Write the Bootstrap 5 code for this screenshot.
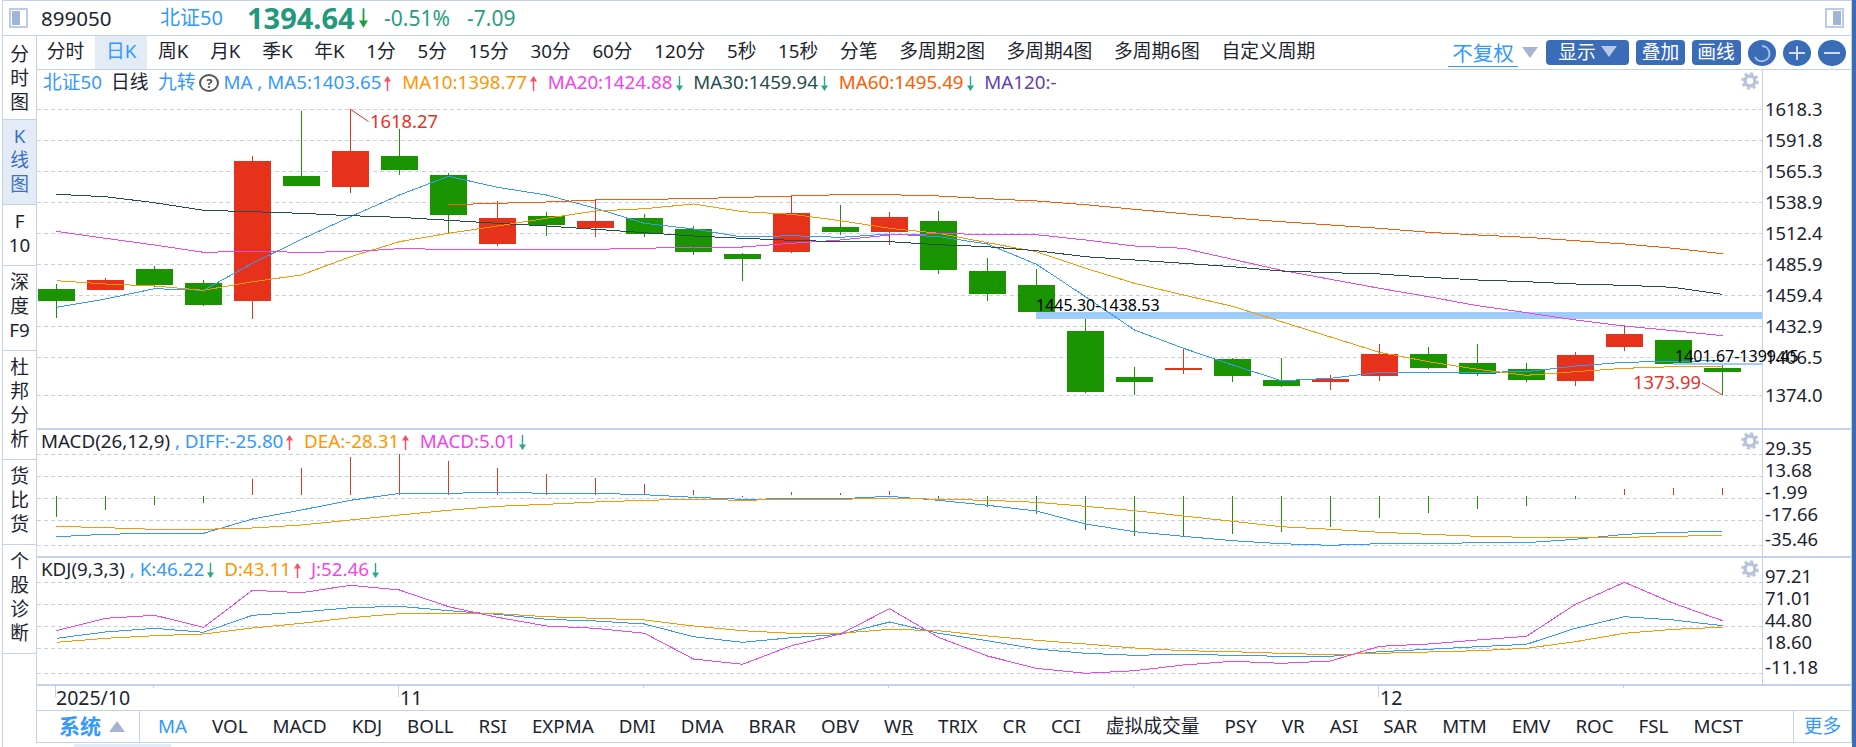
<!doctype html>
<html lang="zh-CN">
<head>
<meta charset="utf-8">
<title>北证50 K线图</title>
<link rel="stylesheet" href="https://cdn.jsdelivr.net/npm/bootstrap@5.3.0/dist/css/bootstrap.min.css">
<style>
:root{--line:#c5d1e8;--blue:#3399ff;--ink:#1c2430;--orange:#ff9500;--pink:#ee44ee;--deep:#264d4d;--fire:#ff5a00;--violet:#6040b0;--down:#2aa88a;--up:#ff4d5e;--btn:#3a6cb8;--tint:#e3ebf7;--muted:#a7b4cf}
html,body{margin:0;height:747px;width:1856px;overflow:hidden;background:#fff}
body{font-family:"Noto Sans","Noto Sans CJK SC",sans-serif;color:var(--ink);font-size:18.75px;line-height:24px}
.app-shell{margin-left:2px;width:1854px;height:747px;border-left:1px solid var(--line);border-right:4px solid var(--btn);position:relative}
.app-inner{border-right:1px solid var(--line);height:743px}
.quote-bar{height:36px;border-top:1px solid var(--line);border-bottom:1px solid var(--line);flex:none}
.frame-icon{width:19px;height:20px;border:2px solid #b9cbe6;padding:1px;flex:none}
.frame-icon i{display:block;width:8px;height:100%;background:#a0b4d8}
.frame-icon.flip i{margin-left:auto}
.q-left{margin-left:6px}
.q-code{margin-left:13px;font-size:20.5px;width:119px}
.q-name{font-size:20px;color:var(--blue);width:87px}
.q-price{font-size:29px;font-weight:700;color:#22997a;width:113px}
.q-pct{font-size:21px;color:#2a9d80;width:83px}
.q-chg{font-size:21px;color:#2a9d80}
.q-right{margin-left:auto;margin-right:7px}
.side-tabs{width:34px;flex:none;border-right:1px solid var(--line)}
.side-cell{padding:4px 0 8px;border-bottom:1px solid var(--line);text-align:center;line-height:24px;box-sizing:border-box}
.side-cell.first{padding:6px 0 5px}
.side-cell.on{background:var(--tint);color:#3a70c8}
.side-cell span{display:block}
.work{width:1814px;flex:none}
.tool-bar{height:34px;border-bottom:1px solid var(--line);flex:none}
.tool-bar .nav-link{padding:0 10.85px;color:var(--ink);line-height:30px;font-size:18.75px;height:33px}
.ind-bar .nav-link{padding:0 12.5px;color:var(--ink);font-size:18.75px;line-height:29px;height:31px}
.tool-bar .nav-link.active{background:var(--tint);color:var(--blue)}
.tool-bar .nav-first{margin-left:-1px}
.fq{font-size:20.5px;color:var(--blue);border-bottom:1px solid var(--blue);width:70px;height:26px;line-height:25px;text-align:center;margin-top:3px}
.tri-d{display:inline-block;width:0;height:0;border-left:8px solid transparent;border-right:8px solid transparent;border-top:11px solid var(--muted)}
.fq-tri{margin:0 8px 0 4px}
.tool-btn{height:25px;padding:0 0 2px;border:0;border-radius:4px;background:var(--btn);color:#fff;font-size:18.75px;line-height:23px;--bs-btn-hover-bg:var(--btn);--bs-btn-hover-color:#fff}
.w83{width:83px}.w49{width:49px}
.btn-tri{border-top-color:#b9c8e4;margin-left:5px}
.round-btn{width:28.5px;height:26px;border-radius:50%;background:var(--btn);flex:none;padding:0;border:0}
.round-btn svg{display:block}
.mg7{margin-left:7px}.mg6{margin-left:6.5px}
.tool-right{margin-right:5px}
.pane{position:relative;border-bottom:2px solid var(--line);flex:none}
.pane-main{height:360px}.pane-sub{height:128px}
.pane svg.plot{display:block;width:1814px;height:100%}
.pane-main svg.plot{height:358px}
.pane-sub svg.plot{height:126px}
.legend{position:absolute;left:6px;top:0;line-height:24px;white-space:nowrap;font-size:18.75px}
.pane-sub .legend{left:4px;top:-1px}
.legend .gap{margin-right:10.7px}
.legend .gap-s{margin-right:10px}
.lg-a{margin-left:9px}.lg-b{margin-left:9.5px}.lg-c{margin-left:5px}
.c-blue{color:var(--blue)}.c-orange{color:var(--orange)}.c-pink{color:var(--pink)}.c-deep{color:var(--deep)}.c-fire{color:var(--fire)}.c-violet{color:var(--violet)}
.trend{width:7px;height:15px;display:inline-block;vertical-align:-2px;margin-left:3px}
.trend.up{color:var(--up)}.trend.dn{color:var(--down)}
.big-arrow{width:9px;height:24px;color:#17a33a;margin-right:16px;margin-left:-1px;flex:none}
.qmark{width:20px;height:18px;border:2px solid #555;border-radius:50%;font-size:13px;font-weight:700;line-height:14px;text-align:center;color:#555;display:inline-block;margin:0 4px;vertical-align:1px}
.gear{position:absolute;right:92px;width:18px;height:18px;top:2px}
.date-axis{height:25px;border-bottom:1px solid var(--line);flex:none}
.date-axis svg{display:block;width:1814px;height:24px;overflow:visible}
.ind-bar{height:32px;border-bottom:1px solid var(--line);flex:none}
.sys-tab{width:103px;border-right:1px solid var(--line);color:var(--blue);font-size:21px;font-weight:700;padding-left:22px;line-height:30px;flex:none}
.tri-u{display:inline-block;width:0;height:0;border-left:8px solid transparent;border-right:8px solid transparent;border-bottom:11px solid var(--muted);margin-left:8px;vertical-align:2px}
.ind-bar .nav{margin-left:5.5px}
.ind-bar .nav-link.active{color:var(--blue);background:none}
.more-tab{margin-left:auto;width:58px;border-left:1px solid var(--line);color:var(--blue);line-height:29px;text-align:center;flex:none}
.foot-thumb{position:absolute;left:71px;bottom:0;width:97px;height:3px;background:var(--tint)}
svg text{font-family:"Noto Sans","Noto Sans CJK SC",sans-serif;font-size:18.4px;fill:var(--ink)}
svg text.red{fill:#e6322a}
svg text.blk{fill:#000;font-size:16px}
.date-axis svg text{font-size:19.5px}
.grid-l{stroke:var(--line);stroke-width:1;stroke-dasharray:4 3;shape-rendering:crispEdges}
.ser{fill:none;stroke-width:1;shape-rendering:crispEdges}
</style>
</head>
<body>
<svg width="0" height="0" class="position-absolute">
  <symbol id="a-up" viewBox="0 0 7 15"><path d="M3.5 1V15" stroke="currentColor" stroke-width="1.4"/><path d="M3.5 0L7 5.5H0Z" fill="currentColor"/></symbol>
  <symbol id="a-dn" viewBox="0 0 7 15"><path d="M3.5 0V14" stroke="currentColor" stroke-width="1.4"/><path d="M3.5 15L7 9.5H0Z" fill="currentColor"/></symbol>
  <symbol id="gear" viewBox="0 0 18 18"><circle cx="9" cy="9" r="5" fill="none" stroke="#b7c2da" stroke-width="3.4"/><circle cx="9" cy="9" r="7.6" fill="none" stroke="#b7c2da" stroke-width="2.4" stroke-dasharray="3 2.97"/></symbol>
</svg>
<div class="app-shell">
<div class="app-inner d-flex flex-column">
  <header class="quote-bar d-flex align-items-center">
    <span class="frame-icon q-left"><i></i></span>
    <span class="q-code">899050</span>
    <span class="q-name">北证50</span>
    <span class="q-price">1394.64</span>
    <svg class="big-arrow"><use href="#a-dn"/></svg>
    <span class="q-pct">-0.51%</span>
    <span class="q-chg">-7.09</span>
    <span class="frame-icon flip q-right"><i></i></span>
  </header>
  <div class="d-flex flex-grow-1">
    <nav class="side-tabs">
      <div class="side-cell first"><span>分</span><span>时</span><span>图</span></div>
      <div class="side-cell on"><span>K</span><span>线</span><span>图</span></div>
      <div class="side-cell"><span>F</span><span>10</span></div>
      <div class="side-cell"><span>深</span><span>度</span><span>F9</span></div>
      <div class="side-cell"><span>杜</span><span>邦</span><span>分</span><span>析</span></div>
      <div class="side-cell"><span>货</span><span>比</span><span>货</span></div>
      <div class="side-cell"><span>个</span><span>股</span><span>诊</span><span>断</span></div>
    </nav>
    <main class="work d-flex flex-column">
      <div class="tool-bar d-flex align-items-center">
        <ul class="nav flex-nowrap">
          <li class="nav-item nav-first"><a class="nav-link" href="#">分时</a></li>
          <li class="nav-item"><a class="nav-link active" href="#">日K</a></li>
          <li class="nav-item"><a class="nav-link" href="#">周K</a></li>
          <li class="nav-item"><a class="nav-link" href="#">月K</a></li>
          <li class="nav-item"><a class="nav-link" href="#">季K</a></li>
          <li class="nav-item"><a class="nav-link" href="#">年K</a></li>
          <li class="nav-item"><a class="nav-link" href="#">1分</a></li>
          <li class="nav-item"><a class="nav-link" href="#">5分</a></li>
          <li class="nav-item"><a class="nav-link" href="#">15分</a></li>
          <li class="nav-item"><a class="nav-link" href="#">30分</a></li>
          <li class="nav-item"><a class="nav-link" href="#">60分</a></li>
          <li class="nav-item"><a class="nav-link" href="#">120分</a></li>
          <li class="nav-item"><a class="nav-link" href="#">5秒</a></li>
          <li class="nav-item"><a class="nav-link" href="#">15秒</a></li>
          <li class="nav-item"><a class="nav-link" href="#">分笔</a></li>
          <li class="nav-item"><a class="nav-link" href="#">多周期2图</a></li>
          <li class="nav-item"><a class="nav-link" href="#">多周期4图</a></li>
          <li class="nav-item"><a class="nav-link" href="#">多周期6图</a></li>
          <li class="nav-item"><a class="nav-link" href="#">自定义周期</a></li>
        </ul>
        <div class="ms-auto d-flex align-items-center tool-right">
          <span class="fq">不复权</span>
          <span class="tri-d fq-tri"></span>
          <button class="btn tool-btn w83 d-flex align-items-center justify-content-center" type="button">显示<span class="tri-d btn-tri"></span></button>
          <button class="btn tool-btn w49 mg7" type="button">叠加</button>
          <button class="btn tool-btn w49 mg6" type="button">画线</button>
          <button class="round-btn mg7" type="button" aria-label="刷新"><svg width="28" height="26"><path d="M14 6A7.6 7.6 0 1 1 7 17" fill="none" stroke="#a9c0e3" stroke-width="2"/></svg></button>
          <button class="round-btn mg6" type="button" aria-label="放大"><svg width="28" height="26"><path d="M6 13H22M14 6V20" fill="none" stroke="#cfdcf0" stroke-width="2"/></svg></button>
          <button class="round-btn mg6" type="button" aria-label="缩小"><svg width="28" height="26"><path d="M6 13H22" fill="none" stroke="#cfdcf0" stroke-width="2"/></svg></button>
        </div>
      </div>

      <section class="pane pane-main">
        <svg class="plot" id="p-main" viewBox="37 70 1814 358"></svg>
        <div class="legend"><span class="c-blue">北证50</span><span class="lg-a">日线</span><span class="c-blue lg-b">九转</span><span class="qmark">?</span><span class="c-blue">MA ,</span><span class="c-blue lg-c">MA5:1403.65</span><svg class="trend up gap"><use href="#a-up"/></svg><span class="c-orange">MA10:1398.77</span><svg class="trend up gap"><use href="#a-up"/></svg><span class="c-pink">MA20:1424.88</span><svg class="trend dn gap"><use href="#a-dn"/></svg><span class="c-deep">MA30:1459.94</span><svg class="trend dn gap"><use href="#a-dn"/></svg><span class="c-fire">MA60:1495.49</span><svg class="trend dn gap"><use href="#a-dn"/></svg><span class="c-violet">MA120:-</span></div>
        <svg class="gear"><use href="#gear"/></svg>
      </section>

      <section class="pane pane-sub">
        <svg class="plot" id="p-macd" viewBox="37 430 1814 126"></svg>
        <div class="legend"><span>MACD(26,12,9)</span><span class="c-blue"> , DIFF:-25.80</span><svg class="trend up gap"><use href="#a-up"/></svg><span class="c-orange">DEA:-28.31</span><svg class="trend up gap"><use href="#a-up"/></svg><span class="c-pink">MACD:5.01</span><svg class="trend dn"><use href="#a-dn"/></svg></div>
        <svg class="gear"><use href="#gear"/></svg>
      </section>

      <section class="pane pane-sub">
        <svg class="plot" id="p-kdj" viewBox="37 558 1814 126"></svg>
        <div class="legend"><span>KDJ(9,3,3)</span><span class="c-blue"> , K:46.22</span><svg class="trend dn gap-s"><use href="#a-dn"/></svg><span class="c-orange">D:43.11</span><svg class="trend up gap-s"><use href="#a-up"/></svg><span class="c-pink">J:52.46</span><svg class="trend dn"><use href="#a-dn"/></svg></div>
        <svg class="gear"><use href="#gear"/></svg>
      </section>

      <div class="date-axis">
        <svg viewBox="37 686 1814 24">
          <g fill="#c5d1e8">
            <rect x="55" y="686" width="1" height="11"/><rect x="398" y="686" width="1" height="11"/><rect x="1378" y="686" width="1" height="11"/>
            <rect x="153" y="686" width="1" height="2"/><rect x="643" y="686" width="1" height="2"/><rect x="888" y="686" width="1" height="2"/><rect x="1133" y="686" width="1" height="2"/><rect x="1623" y="686" width="1" height="2"/>
          </g>
          <text x="56" y="705">2025/10</text><text x="400" y="705">11</text><text x="1380" y="705">12</text>
        </svg>
      </div>

      <div class="ind-bar d-flex">
        <div class="sys-tab">系统<span class="tri-u"></span></div>
        <ul class="nav flex-nowrap">
          <li class="nav-item"><a class="nav-link active" href="#">MA</a></li>
          <li class="nav-item"><a class="nav-link" href="#">VOL</a></li>
          <li class="nav-item"><a class="nav-link" href="#">MACD</a></li>
          <li class="nav-item"><a class="nav-link" href="#">KDJ</a></li>
          <li class="nav-item"><a class="nav-link" href="#">BOLL</a></li>
          <li class="nav-item"><a class="nav-link" href="#">RSI</a></li>
          <li class="nav-item"><a class="nav-link" href="#">EXPMA</a></li>
          <li class="nav-item"><a class="nav-link" href="#">DMI</a></li>
          <li class="nav-item"><a class="nav-link" href="#">DMA</a></li>
          <li class="nav-item"><a class="nav-link" href="#">BRAR</a></li>
          <li class="nav-item"><a class="nav-link" href="#">OBV</a></li>
          <li class="nav-item"><a class="nav-link" href="#">W<u>R</u></a></li>
          <li class="nav-item"><a class="nav-link" href="#">TRIX</a></li>
          <li class="nav-item"><a class="nav-link" href="#">CR</a></li>
          <li class="nav-item"><a class="nav-link" href="#">CCI</a></li>
          <li class="nav-item"><a class="nav-link" href="#">虚拟成交量</a></li>
          <li class="nav-item"><a class="nav-link" href="#">PSY</a></li>
          <li class="nav-item"><a class="nav-link" href="#">VR</a></li>
          <li class="nav-item"><a class="nav-link" href="#">ASI</a></li>
          <li class="nav-item"><a class="nav-link" href="#">SAR</a></li>
          <li class="nav-item"><a class="nav-link" href="#">MTM</a></li>
          <li class="nav-item"><a class="nav-link" href="#">EMV</a></li>
          <li class="nav-item"><a class="nav-link" href="#">ROC</a></li>
          <li class="nav-item"><a class="nav-link" href="#">FSL</a></li>
          <li class="nav-item"><a class="nav-link" href="#">MCST</a></li>
        </ul>
        <div class="more-tab">更多</div>
      </div>
    </main>
  </div>
</div>
<div class="foot-thumb"></div>
</div>
<script src="https://cdn.jsdelivr.net/npm/bootstrap@5.3.0/dist/js/bootstrap.bundle.min.js"></script>
<script>
var NS='http://www.w3.org/2000/svg';
function el(p,n,a,t){var e=document.createElementNS(NS,n);for(var k in a)e.setAttribute(k,a[k]);if(t)e.textContent=t;p.appendChild(e);return e}
function rect(p,x,y,w,h,f){el(p,'rect',{x:x,y:Math.round(y),width:w,height:Math.max(1,Math.round(h)),fill:f})}
function grid(p,ys){ys.forEach(function(y){el(p,'line',{x1:37,x2:1762,y1:y+.5,y2:y+.5,'class':'grid-l'})})}
function axis(p,y0,y1,vals,ys,off){el(p,'rect',{x:1762,y:y0,width:1,height:y1-y0,fill:'#c5d1e8'});vals.forEach(function(v,i){el(p,'text',{x:1765,y:ys[i]+off},v)})}
function ser(p,y0,arr,c,start){start=start||0;var s=arr.map(function(z,i){return (56.5+49*(i+start))+','+(y0+z/3).toFixed(1)}).join(' ');el(p,'polyline',{points:s,stroke:c,'class':'ser'})}
var G='#1a9400',R='#e6321a';
var m=document.getElementById('p-main');
var gy=[109,140,171,202,233,264,295,326,357,395];
grid(m,gy);
var C=[[G,567,603,552,654],[R,540,570,534,570],[G,507,555,498,561],[G,549,615,540,618],[R,183,603,168,657],[G,228,258,33,258],[R,153,261,28,279],[G,168,210,87,225],[G,225,345,219,400],[R,354,432,304,438],[G,348,375,336,408],[R,363,384,300,411],[G,354,402,342,411],[G,387,456,378,465],[G,462,477,459,543],[R,339,456,285,459],[G,381,396,315,405],[R,351,396,336,435],[G,363,510,333,522],[G,513,582,474,603],[G,555,636,507,640],[G,693,876,657,879],[G,831,846,801,885],[R,804,810,745,822],[G,777,828,774,846],[G,840,858,774,861],[R,837,846,825,870],[R,762,828,732,843],[G,762,804,741,807],[G,789,822,732,828],[G,807,840,789,846],[R,765,843,756,858],[R,702,741,678,753],[G,720,792,720,795],[G,804,816,795,885]];
C.forEach(function(c,i){var x=38+49*i;rect(m,x+18,100+c[3]/3,1,(c[4]-c[3])/3,c[0]);rect(m,x,100+c[1]/3,37,(c[2]-c[1])/3,c[0])});
rect(m,1036,312,726,7,'#9fcdfb');
rect(m,1673,363,89,2,'#9fcdfb');
ser(m,100,[622,597,566,571,490,418,350,285,229,262,285,325,370,387,411,407,412,402,410,432,493,590,690,745,795,842,835,817,817,817,815,798,787,784,782],'#3399ff');
ser(m,100,[542,552,558,571,545,525,470,425,400,378,355,333,326,312,335,343,362,385,400,428,455,505,550,585,619,665,711,757,785,808,826,815,805,800,800],'#ff9500');
ser(m,100,[394,415,435,457,454,457,455,446,448,448,448,448,445,441,441,430,420,405,401,403,404,420,438,445,478,511,538,565,590,617,638,660,678,692,707],'#ee44ee');
ser(m,100,[283,290,308,331,335,340,347,352,361,370,378,388,398,408,415,421,425,425,434,440,452,470,480,490,500,513,518,522,532,540,545,552,556,562,583],'#264d4d');
ser(m,100,[314,310,306,300,298,296,292,288,284,284,288,296,303,314,328,341,354,365,375,385,397,405,412,422,432,445,461],'#ff5a00',8);
axis(m,70,428,['1618.3','1591.8','1565.3','1538.9','1512.4','1485.9','1459.4','1432.9','1406.5','1374.0'],gy,7);
el(m,'polyline',{points:'350,109 368.5,121.5',stroke:'#e6322a',fill:'none'});
el(m,'text',{x:370,y:128,'class':'red'},'1618.27');
el(m,'polyline',{points:'1702,383 1722.5,395',stroke:'#e6322a',fill:'none'});
el(m,'text',{x:1633,y:389,'class':'red'},'1373.99');
el(m,'text',{x:1036,y:311,'class':'blk'},'1445.30-1438.53');
el(m,'text',{x:1675,y:362,'class':'blk'},'1401.67-1399.45');

var a=document.getElementById('p-macd');
var my=[454,476,498,520,545];grid(a,my);
var B=[290,270,255,249,-177,-144,-111,-102,-123,-144,-162,-174,-192,-210,231,-216,-219,-213,237,261,282,330,348,348,342,336,321,294,279,267,258,237,-207,-204,-204];
B.forEach(function(b,i){var x=56+49*i;if(b>0)rect(a,x,420+76,1,(b-228)/3,G);else rect(a,x,420-b/3,1,(225+b)/3,'#d83a2a')});
ser(a,420,[350,343,340,340,297,270,241,220,220,217,220,220,224,232,238,236,236,229,241,256,273,312,335,349,362,371,376,371,371,368,368,358,343,337,334],'#3399ff');
ser(a,420,[319,323,328,328,324,315,300,285,271,259,253,246,241,238,241,238,238,234,238,241,247,259,272,288,304,320,328,337,343,349,352,352,352,349,346],'#ff9500');
axis(a,430,556,['29.35','13.68','-1.99','-17.66','-35.46'],my,1);

var k=document.getElementById('p-kdj');
var ky=[582,604,626,648,673];grid(k,ky);
ser(k,420,[655,636,625,637,586,576,563,559,572,583,598,603,612,650,667,653,643,606,640,662,687,700,706,703,706,709,709,695,688,680,673,625,590,600,617],'#3399ff');
ser(k,420,[667,655,647,642,624,610,593,581,581,581,590,595,600,618,632,640,640,628,632,648,661,672,684,692,695,700,704,700,696,692,685,665,640,628,622],'#ff9500');
ser(k,420,[632,595,586,622,511,518,496,510,560,592,618,625,640,717,733,677,642,566,652,708,745,760,752,735,724,730,723,679,672,660,649,553,487,550,602],'#ee44ee');
axis(k,558,684,['97.21','71.01','44.80','18.60','-11.18'],ky,1);
</script>
</body>
</html>
